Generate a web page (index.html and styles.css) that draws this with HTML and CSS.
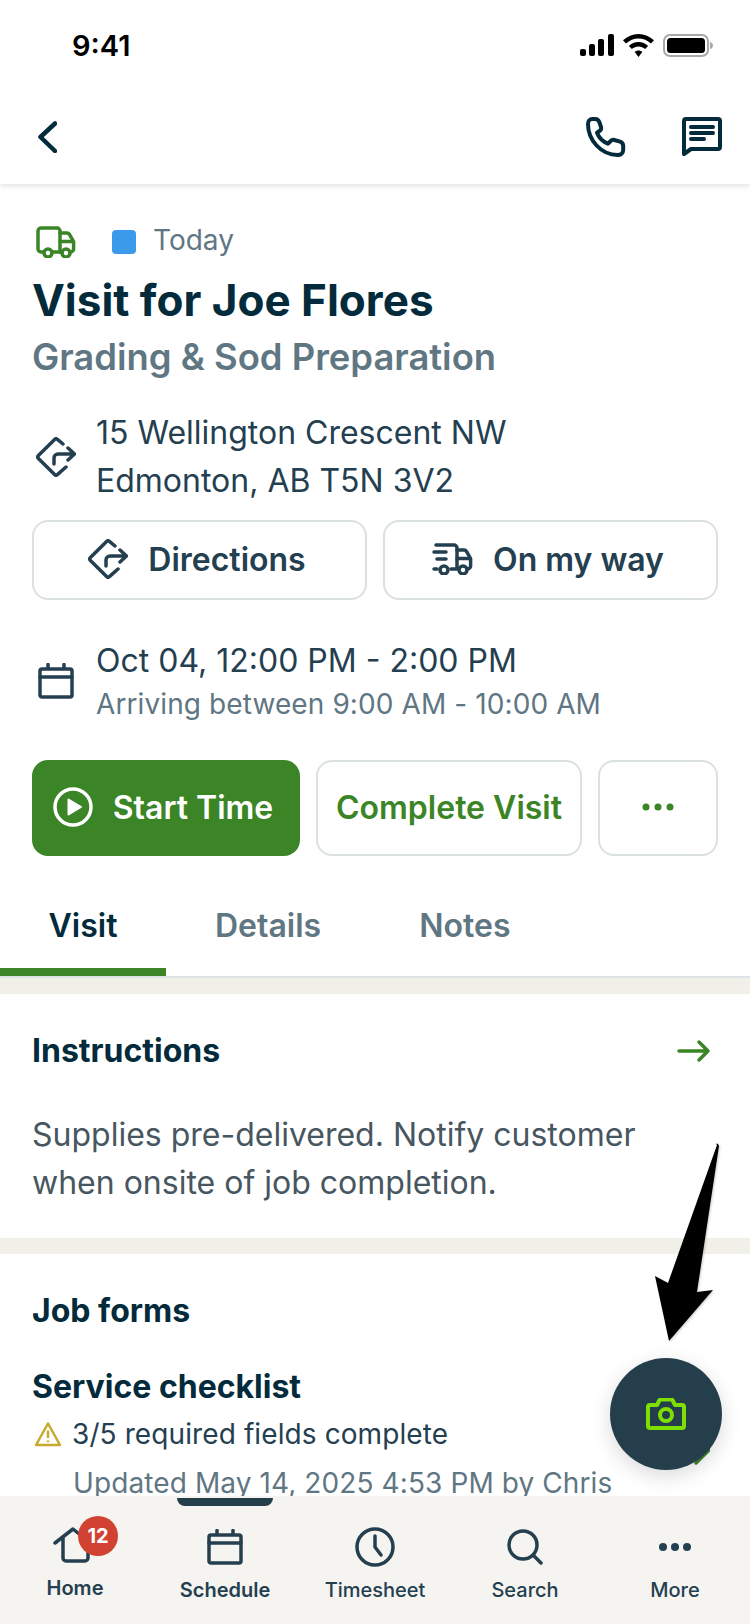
FILE: index.html
```html
<!DOCTYPE html>
<html>
<head>
    <title>Visit for Joe Flores</title>
    <link rel="stylesheet" href="styles.css">
</head>
<body>
    <div class="phone">
        <header class="top">
            <div class="status">
                <span class="clock">9:41</span>
                <div class="status-icons">
                    <svg width="34" height="22" viewBox="0 0 34 22"><rect x="0" y="15" width="6" height="7" rx="2"/><rect x="9" y="10" width="6" height="12" rx="2"/><rect x="18" y="5" width="6" height="17" rx="2"/><rect x="28" y="0" width="6" height="22" rx="2"/></svg>
                    <svg width="31" height="23" viewBox="0 0 31 23"><path d="M15.500 0C9.500 0 4.300 2.400 0 6.300l3 3.300C6.500 6.300 10.800 4.500 15.500 4.500s9 1.800 12.500 5.100l3-3.300C26.700 2.400 21.500 0 15.500 0z"/><path d="M15.500 8c-3.700 0-7 1.400-9.600 3.900l3 3.200c1.800-1.700 4.100-2.700 6.600-2.700s4.800 1 6.600 2.700l3-3.200C22.500 9.400 19.200 8 15.500 8z"/><path d="M15.500 16.500c-1.500 0-2.800.5-3.800 1.500l3.800 5 3.800-5c-1-1-2.300-1.500-3.800-1.500z"/></svg>
                    <svg width="50" height="23" viewBox="0 0 50 23"><rect x="1" y="1" width="44" height="21" rx="6" fill="none" stroke="#a8a8a8" stroke-width="2"/><rect x="4" y="4" width="38" height="15" rx="3.500"/><path d="M47 8c2 .5 3 2 3 3.500s-1 3-3 3.500z" fill="#a8a8a8"/></svg>
                </div>
            </div>
            <nav class="bar">
                <svg class="back" width="19" height="32" viewBox="0 0 19 32"><path d="M17 2.500 2.500 16 17 30"/></svg>
                <div class="bar-actions">
                    <svg class="line-icon dark" width="40" height="40" viewBox="0 0 40 40"><path d="M6 2h3c2 0 3.500 1 4.300 3l1.700 5c.5 1.700 0 3-1.500 4l-2.500 1.700c2 5 6 9 11 11l2.200-2.200c1-1.400 2.300-2 4-1.500l6 1.700c2 .8 3 2.300 3 4.300v4c0 3-2.500 5-5.500 5C15 38 2 23 2 7c0-3 2-5 4-5z"/></svg>
                    <svg class="line-icon dark" width="40" height="40" viewBox="0 0 40 40"><path d="M2 4a2 2 0 0 1 2-2h32a2 2 0 0 1 2 2v26a2 2 0 0 1-2 2H9l-7 5z"/><path d="M9 10h22M9 16h22M9 22h13"/></svg>
                </div>
            </nav>
        </header>

        <main class="content">
            <section class="visit">
                <div class="meta">
                    <svg class="line-icon green" width="40" height="32" viewBox="0 0 40 32"><path d="M7 26H5a3 3 0 0 1-3-3V5a3 3 0 0 1 3-3h16a3 3 0 0 1 3 3v21h-7"/><path d="M24 7h7a3 3 0 0 1 2.600 1.500l4 7v7.500a3 3 0 0 1-3 3h-.6M24 15.500h13M24 26h2"/><circle cx="12" cy="27" r="4"/><circle cx="30" cy="27" r="4"/></svg>
                    <span class="swatch"></span>
                    <span class="today">Today</span>
                </div>
                <h1>Visit for Joe Flores</h1>
                <h2>Grading &amp; Sod Preparation</h2>

                <div class="info address">
                    <svg class="line-icon" width="40" height="40" viewBox="0 0 40 40"><path d="M27 7 21.400 2.400a2 2 0 0 0-2.800 0L2.400 18.600a2 2 0 0 0 0 2.800l16.200 16.200a2 2 0 0 0 2.800 0L30 30"/><path d="M18 27v-6a4 4 0 0 1 4-4h16M32 11l6.500 6-6.500 6"/></svg>
                    <p>15 Wellington Crescent NW<br>Edmonton, AB T5N 3V2</p>
                </div>
                <div class="btn-row">
                    <button class="btn">
                        <svg class="line-icon" width="40" height="40" viewBox="0 0 40 40"><path d="M27 7 21.400 2.400a2 2 0 0 0-2.800 0L2.400 18.600a2 2 0 0 0 0 2.800l16.200 16.200a2 2 0 0 0 2.800 0L30 30"/><path d="M18 27v-6a4 4 0 0 1 4-4h16M32 11l6.500 6-6.500 6"/></svg>
                        Directions
                    </button>
                    <button class="btn">
                        <svg class="line-icon" width="41" height="32" viewBox="0 0 41 32"><path d="M4 2h18a3 3 0 0 1 3 3v21h-6M2 26h3"/><path d="M25 7h7a3 3 0 0 1 2.600 1.500l4 7v7.500a3 3 0 0 1-3 3M25 15.500h13M2 9h12M5 16h9"/><circle cx="12" cy="27" r="4"/><circle cx="31" cy="27" r="4"/></svg>
                        On my way
                    </button>
                </div>

                <div class="info when">
                    <svg class="line-icon" width="36" height="36" viewBox="0 0 36 36"><rect x="2" y="6" width="32" height="28" rx="2"/><path d="M2 14h32M10 1.500v4M26 1.500v4"/></svg>
                    <div>
                        <p>Oct 04, 12:00 PM - 2:00 PM</p>
                        <p class="arriving">Arriving between 9:00 AM - 10:00 AM</p>
                    </div>
                </div>
                <div class="action-row">
                    <button class="action start">
                        <svg width="40" height="40" viewBox="0 0 40 40"><circle cx="20" cy="20" r="18" fill="none" stroke="#fff" stroke-width="3.500"/><path d="M15.500 12.500 28 20l-12.500 7.500z" fill="#fff" stroke="#fff" stroke-width="2" stroke-linejoin="round"/></svg>
                        Start Time
                    </button>
                    <button class="action complete">Complete Visit</button>
                    <button class="action more-btn" aria-label="More">
                        <svg width="32" height="8" viewBox="0 0 32 8"><circle cx="4" cy="4" r="3.500"/><circle cx="16" cy="4" r="3.500"/><circle cx="28" cy="4" r="3.500"/></svg>
                    </button>
                </div>
            </section>

            <div class="tabs">
                <a class="tab active">Visit</a>
                <a class="tab">Details</a>
                <a class="tab">Notes</a>
            </div>

            <section class="card instructions">
                <div class="card-head">
                    <h3>Instructions</h3>
                    <svg class="line-icon green" width="34" height="24" viewBox="0 0 34 24"><path d="M2 12h29M22 3l9 9-9 9"/></svg>
                </div>
                <p class="note">Supplies pre-delivered. Notify customer when onsite of job completion.</p>
            </section>

            <section class="card forms">
                <h3>Job forms</h3>
                <div class="form-item">
                    <h4>Service checklist</h4>
                    <div class="form-status">
                        <svg width="28" height="26" viewBox="0 0 28 26"><path d="M14 2.500 2 24h24z" fill="none" stroke="#c9a92c" stroke-width="2.500" stroke-linejoin="round"/><path d="M14 9.500v7.500M14 19.500v1.500" stroke="#c9a92c" stroke-width="2.500" fill="none"/></svg>
                        <span>3/5 required fields complete</span>
                    </div>
                    <p class="updated">Updated May 14, 2025 4:53 PM by Chris</p>
                    <svg class="chevron line-icon green" width="16" height="30" viewBox="0 0 16 30"><path d="M2 2l13 13L2 28"/></svg>
                </div>
            </section>
        </main>

        <footer class="tabbar">
            <span class="tabbar-pill"></span>
            <a class="nav-item bold home">
                <span class="nav-icon">
                    <svg class="line-icon" width="38" height="36" viewBox="0 0 38 36"><path d="M2 16 20 2l16 13M10 11v20a3 3 0 0 0 3 3h19a3 3 0 0 0 3-3V14"/></svg>
                    <span class="badge">12</span>
                </span>
                Home
            </a>
            <a class="nav-item bold">
                <span class="nav-icon">
                    <svg class="line-icon" width="36" height="36" viewBox="0 0 36 36"><rect x="2" y="6" width="32" height="28" rx="2"/><path d="M2 14h32M10 1.500v4M26 1.500v4"/></svg>
                </span>
                Schedule
            </a>
            <a class="nav-item">
                <span class="nav-icon">
                    <svg class="line-icon" width="40" height="40" viewBox="0 0 40 40"><circle cx="20" cy="20" r="18"/><path d="M20 9v11l6 8"/></svg>
                </span>
                Timesheet
            </a>
            <a class="nav-item">
                <span class="nav-icon">
                    <svg class="line-icon" width="36" height="36" viewBox="0 0 36 36"><circle cx="16" cy="16" r="14"/><path d="M26 26l8 8"/></svg>
                </span>
                Search
            </a>
            <a class="nav-item">
                <span class="nav-icon">
                    <svg width="32" height="8" viewBox="0 0 32 8" class="dots"><circle cx="4" cy="4" r="4"/><circle cx="16" cy="4" r="4"/><circle cx="28" cy="4" r="4"/></svg>
                </span>
                More
            </a>
        </footer>

        <svg class="pointer" width="70" height="204" viewBox="0 0 70 204"><path d="M62 2C60 0 63 0 64 3L42 149 58 147 14 198 0 133 13 140z"/></svg>

        <button class="fab" aria-label="Add photo">
            <svg class="line-icon lime" width="40" height="32" viewBox="0 0 40 32"><path d="M2 9a2 2 0 0 1 2-2h7l2-4a2 2 0 0 1 2-1.500h10a2 2 0 0 1 2 1.500l2 4h7a2 2 0 0 1 2 2v19a2 2 0 0 1-2 2H4a2 2 0 0 1-2-2z"/><circle cx="20" cy="17" r="6"/></svg>
        </button>
    </div>
</body>
</html>
```

FILE: styles.css
```css
* {
    box-sizing: border-box;
}

body {
    margin: 0;
    background-color: #fff;
    font-family: Inter, "Liberation Sans", sans-serif;
    color: #244050;
}

p, h1, h2, h3, h4 {
    margin: 0;
}

.phone {
    position: relative;
    display: flex;
    flex-direction: column;
    width: 750px;
    height: 1624px;
    overflow: hidden;
    background-color: #fff;
}

.line-icon {
    flex-shrink: 0;
    fill: none;
    stroke: #244050;
    stroke-width: 3.5;
    stroke-linecap: round;
    stroke-linejoin: round;
}

.line-icon.dark {
    stroke: #032b3b;
    stroke-width: 4;
}

.line-icon.green {
    stroke: #3b8526;
}

.line-icon.lime {
    stroke: #7ee000;
    stroke-width: 4;
}

/* top */
.top {
    position: relative;
    z-index: 2;
    height: 184px;
    flex-shrink: 0;
    background-color: #fff;
    box-shadow: 0 2px 6px rgba(0,0,0,0.12);
}

.status {
    display: flex;
    align-items: center;
    justify-content: space-between;
    height: 90px;
    padding: 0 37px 0 72px;
}

.clock {
    font-size: 29px;
    font-weight: 600;
    color: #000;
}

.status-icons {
    display: flex;
    align-items: center;
    gap: 9px;
}

.bar {
    display: flex;
    align-items: center;
    justify-content: space-between;
    height: 94px;
    padding: 0 28px 0 38px;
}

.back {
    fill: none;
    stroke: #032b3b;
    stroke-width: 4.5;
    stroke-linecap: round;
    stroke-linejoin: round;
}

.bar-actions {
    display: flex;
    gap: 56px;
}

.content {
    flex: 1;
    min-height: 0;
    overflow: hidden;
}

/* visit header */
.visit {
    padding: 42px 32px 0;
}

.meta {
    display: flex;
    align-items: center;
    height: 32px;
    padding-left: 4px;
}

.swatch {
    width: 24px;
    height: 24px;
    margin-left: 36px;
    border-radius: 4px;
    background-color: #3b9bea;
}

.today {
    margin: 0 0 4px 17px;
    font-size: 28px;
    color: #5f7683;
}

h1 {
    margin-top: 16px;
    font-size: 44px;
    line-height: 52px;
    font-weight: 700;
    color: #032b3b;
}

h2 {
    margin-top: 9px;
    font-size: 36.4px;
    line-height: 44px;
    font-weight: 600;
    color: #5f7683;
}

.info {
    display: flex;
    align-items: center;
    gap: 20px;
    padding-left: 4px;
    font-size: 32px;
}

.address {
    margin-top: 30px;
    line-height: 48px;
}

.btn-row {
    display: flex;
    gap: 16px;
    margin-top: 15px;
}

.btn, .action {
    display: flex;
    align-items: center;
    justify-content: center;
    font-family: inherit;
    font-weight: 600;
    background-color: #fff;
    border: 2px solid #dbe0e3;
    border-radius: 16px;
}

.btn {
    flex: 1;
    gap: 20px;
    height: 80px;
    padding: 0 5px 2px 0;
    font-size: 32px;
    color: #244050;
}

.when {
    margin-top: 39px;
    gap: 22px;
    padding-left: 6px;
    line-height: 44px;
}

.when svg {
    margin-bottom: 2px;
}

.arriving {
    font-size: 28px;
    line-height: 42px;
    letter-spacing: 0.1px;
    color: #5f7683;
}

.action-row {
    display: flex;
    gap: 16px;
    margin-top: 35px;
}

.action {
    height: 96px;
    padding: 0 0 2px;
    font-size: 32px;
    color: #3b8526;
}

.start {
    width: 268px;
    gap: 20px;
    padding-right: 6px;
    color: #fff;
    background-color: #3b8526;
    border-color: #3b8526;
}

.complete {
    width: 266px;
}

.more-btn {
    width: 120px;
    fill: #3b8526;
}

/* tabs */
.tabs {
    display: flex;
    height: 122px;
    border-bottom: 2px solid #dfe2e4;
}

.tab {
    display: flex;
    align-items: center;
    justify-content: center;
    height: 120px;
    padding: 26px 49px 0;
    font-size: 32px;
    font-weight: 600;
    color: #5f7683;
    border-bottom: 8px solid transparent;
}

.tab.active {
    width: 166px;
    padding: 26px 0 0;
    color: #032b3b;
    border-bottom-color: #3b8526;
}

/* cards */
.card {
    padding: 0 32px;
    border-top: 16px solid #f0efe8;
}

.instructions {
    height: 260px;
}

h3, h4 {
    font-size: 32px;
    line-height: 40px;
    font-weight: 700;
    color: #032b3b;
}

.card-head {
    display: flex;
    align-items: center;
    justify-content: space-between;
    padding: 37px 7px 0 0;
}

.note {
    margin-top: 40px;
    width: 640px;
    font-size: 32px;
    line-height: 48px;
    color: #47565f;
}

.forms {
    padding-top: 37px;
}

.form-item {
    position: relative;
    margin-top: 36px;
}

.form-status {
    display: flex;
    align-items: center;
    gap: 10px;
    margin-top: 5px;
    font-size: 28px;
    line-height: 44px;
    letter-spacing: 0.1px;
}

.form-status svg {
    flex-shrink: 0;
    margin-left: 2px;
}

.updated {
    margin-top: 5px;
    padding-left: 41px;
    font-size: 28px;
    line-height: 44px;
    letter-spacing: 0.1px;
    color: #5f7683;
}

.chevron {
    position: absolute;
    right: 8px;
    top: 68px;
}

/* bottom nav */
.tabbar {
    position: relative;
    z-index: 3;
    display: grid;
    grid-template-columns: repeat(5, 150px);
    flex-shrink: 0;
    height: 128px;
    background-color: #f6f4f1;
}

.tabbar-pill {
    position: absolute;
    top: 2px;
    left: 177px;
    width: 96px;
    height: 8px;
    border-radius: 0 0 8px 8px;
    background-color: #243e4b;
}

.nav-item {
    display: flex;
    flex-direction: column;
    align-items: center;
    font-size: 20px;
    font-weight: 500;
    color: #244050;
}

.nav-item.bold {
    font-weight: 600;
}

.nav-icon {
    position: relative;
    display: flex;
    align-items: center;
    justify-content: center;
    height: 40px;
    margin: 31px 0 11px;
}

.home .nav-icon {
    margin-bottom: 9px;
}

.home .nav-icon svg {
    margin: 0 6px 4px 0;
}

.dots {
    fill: #244050;
}

.badge {
    position: absolute;
    top: -11px;
    left: 25px;
    display: flex;
    align-items: center;
    justify-content: center;
    width: 40px;
    height: 40px;
    border-radius: 50%;
    font-size: 20px;
    font-weight: 700;
    color: #fff;
    background-color: #d24232;
}

/* overlays */
.pointer {
    position: absolute;
    left: 655px;
    top: 1143px;
    z-index: 4;
    filter: drop-shadow(1px 1px 1px rgba(0,0,0,0.2));
}

.fab {
    position: absolute;
    left: 610px;
    top: 1358px;
    z-index: 2;
    display: flex;
    align-items: center;
    justify-content: center;
    width: 112px;
    height: 112px;
    padding: 0;
    border: none;
    border-radius: 50%;
    background-color: #243e4b;
    box-shadow: 0 6px 20px rgba(0,0,0,0.15);
}
```
